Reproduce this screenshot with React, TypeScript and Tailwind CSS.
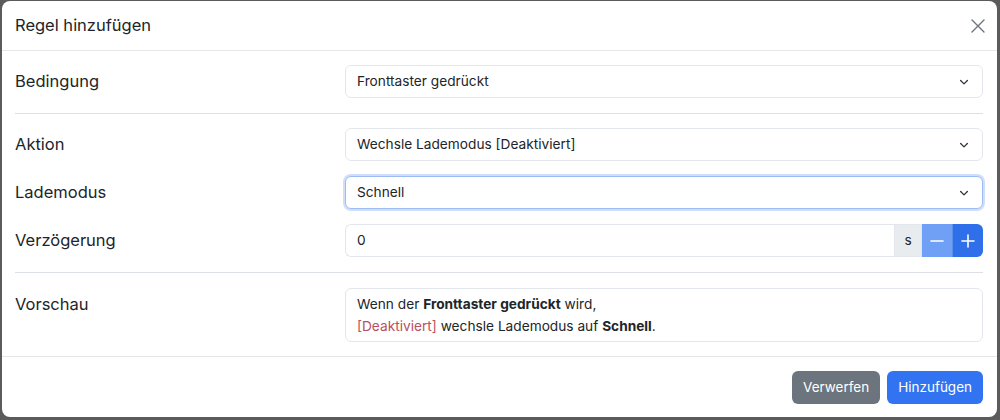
import React from "react";

const font = { fontFamily: "Inter, 'Noto Sans', 'Liberation Sans', sans-serif" };

function Chevron() {
  return (
    <svg width="12" height="12" viewBox="0 0 16 16" fill="none" className="text-[#343a40]">
      <path d="M3.5 6l4.5 4.5L12.5 6" stroke="currentColor" strokeWidth="1.8" strokeLinecap="round" strokeLinejoin="round" />
    </svg>
  );
}

function SelectBox({ value, focused }: { value: string; focused?: boolean }) {
  return (
    <div
      className={
        "flex h-[33px] items-center justify-between rounded-[6px] border bg-white pl-[11px] pr-[12px] text-[13.7px] text-[#212529] " +
        (focused
          ? "border-[#9dbcf4] shadow-[0_0_0_2px_rgba(120,160,240,0.35)]"
          : "border-[#e3e6ea]")
      }
    >
      <span>{value}</span>
      <Chevron />
    </div>
  );
}

function Row({ label, children }: { label: string; children: React.ReactNode }) {
  return (
    <div className="flex items-center">
      <div className="w-[330px] text-[16.5px] text-[#212529]">{label}</div>
      <div className="flex-1">{children}</div>
    </div>
  );
}

export default function App() {
  return (
    <div className="h-[420px] w-[1000px] bg-[#5b5b5b] pb-[3px] pl-[2px] pr-[3px] pt-[1px]" style={font}>
      <div className="flex h-full flex-col overflow-hidden rounded-[8px] bg-white">
        {/* header */}
        <div className="flex h-[50px] shrink-0 items-center justify-between border-b border-[#e5e7eb] pl-[13px] pr-[12px]">
          <div className="text-[16.5px] text-[#212529]">Regel hinzufügen</div>
          <svg width="14" height="14" viewBox="0 0 14 14" className="text-[#6c757d]">
            <path d="M1 1l12 12M13 1L1 13" stroke="currentColor" strokeWidth="1.4" strokeLinecap="round" />
          </svg>
        </div>

        {/* body */}
        <div className="flex flex-1 flex-col pl-[13px] pr-[14px] pt-[14px]">
          <Row label="Bedingung">
            <SelectBox value="Fronttaster gedrückt" />
          </Row>
          <div className="mb-[14px] mt-[15px] border-t border-[#dcdfe3]" />

          <div className="flex flex-col gap-[15px]">
            <Row label="Aktion">
              <SelectBox value="Wechsle Lademodus [Deaktiviert]" />
            </Row>
            <Row label="Lademodus">
              <SelectBox value="Schnell" focused />
            </Row>
            <Row label="Verzögerung">
              <div className="flex h-[33px] text-[13.7px]">
                <div className="flex flex-1 items-center rounded-l-[6px] border border-r-0 border-[#e3e6ea] pl-[11px] text-[#212529]">
                  0
                </div>
                <div className="flex w-[28px] items-center justify-center border border-[#e3e6ea] bg-[#e9ecef] text-[#212529]">
                  s
                </div>
                <div className="flex w-[31px] items-center justify-center border-r border-[#5a8ff0] bg-[#6fa0f5]">
                  <svg width="14" height="14" viewBox="0 0 14 14">
                    <path d="M1 7h12" stroke="white" strokeWidth="1.6" strokeLinecap="round" />
                  </svg>
                </div>
                <div className="flex w-[30px] items-center justify-center rounded-r-[6px] bg-[#2f6fe9]">
                  <svg width="14" height="14" viewBox="0 0 14 14">
                    <path d="M1 7h12M7 1v12" stroke="white" strokeWidth="1.6" strokeLinecap="round" />
                  </svg>
                </div>
              </div>
            </Row>
          </div>
          <div className="mb-[15px] mt-[15px] border-t border-[#dcdfe3]" />

          <div className="flex items-start">
            <div className="w-[330px] pt-[4px] text-[16.5px] text-[#212529]">Vorschau</div>
            <div className="flex-1 rounded-[6px] border border-[#e3e6ea] px-[11px] py-[4px] text-[13.7px] leading-[22px] text-[#212529]">
              <div>
                Wenn der <b className="font-bold">Fronttaster gedrückt</b> wird,
              </div>
              <div>
                <span className="text-[#b9505f]">[Deaktiviert]</span> wechsle Lademodus auf{" "}
                <b className="font-bold">Schnell</b>.
              </div>
            </div>
          </div>
        </div>

        {/* footer */}
        <div className="flex h-[61px] shrink-0 items-center justify-end gap-[7px] border-t border-[#e5e7eb] pr-[14px]">
          <button className="h-[33px] rounded-[6px] bg-[#6c757d] px-[11px] text-[13.5px] text-white">Verwerfen</button>
          <button className="h-[33px] rounded-[6px] bg-[#3173f0] px-[11px] text-[13.5px] text-white">Hinzufügen</button>
        </div>
      </div>
    </div>
  );
}
